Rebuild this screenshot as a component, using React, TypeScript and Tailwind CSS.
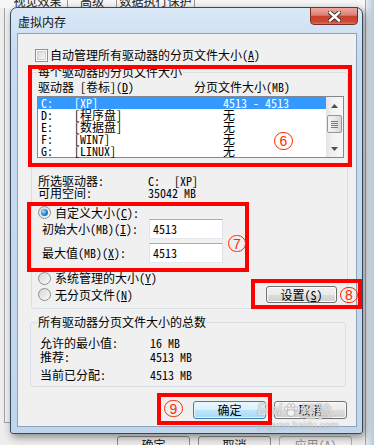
import React from "react";

const CheckBox = () => (
  <span className="block w-[13px] h-[13px] shrink-0 border border-[#8e8f8f] bg-white p-[1px]">
    <span className="block w-full h-full border border-[#cfcfcf] bg-[linear-gradient(135deg,#dadada,#f7f7f7)]" />
  </span>
);

const Radio = ({ checked }: { checked?: boolean }) => (
  <span className="flex items-center justify-center w-[13px] h-[13px] shrink-0 rounded-full border border-[#8e8f8f] bg-[linear-gradient(135deg,#d4d4d4,#fbfbfb)]">
    {checked ? (
      <span className="block w-[7px] h-[7px] rounded-full bg-[radial-gradient(circle_at_35%_35%,#a8e4ff_0%,#2c92dc_45%,#0b4a86_100%)]" />
    ) : null}
  </span>
);

const Button = ({
  children,
  primary,
}: {
  children: React.ReactNode;
  primary?: boolean;
}) => (
  <div
    className={
      primary
        ? "flex items-center justify-center w-[73px] h-[18px] rounded-[3px] border border-[#3c7fb1] bg-[linear-gradient(#eaf6fd,#d9f0fc_50%,#bee6fd_50%,#a7d9f5)] shadow-[inset_0_0_0_1px_#e3f4fc]"
        : "flex items-center justify-center w-[73px] h-[18px] rounded-[3px] border border-[#707070] bg-[linear-gradient(#f2f2f2,#ebebeb_50%,#dddddd_50%,#cfcfcf)] shadow-[inset_0_0_0_1px_#fbfbfb]"
    }
  >
    {children}
  </div>
);

const Key = ({ k }: { k: string }) => (
  <>
    (<u className="underline-offset-[1px]">{k}</u>)
  </>
);

const drives = [
  ["C:", "[XP]", "4513 - 4513"],
  ["D:", "[程序盘]", "无"],
  ["E:", "[数据盘]", "无"],
  ["F:", "[WIN7]", "无"],
  ["G:", "[LINUX]", "无"],
];

const Arrow = ({ up }: { up?: boolean }) => (
  <svg width="7" height="4" viewBox="0 0 7 4">
    <path d={up ? "M0 4 L3.5 0 L7 4 Z" : "M0 0 L7 0 L3.5 4 Z"} fill="#4d4d4d" />
  </svg>
);

const Mark = ({ n, className }: { n: string; className: string }) => (
  <span
    className={`absolute flex items-center justify-center rounded-full border border-[#ff2a00] text-[#ff2a00] font-['Liberation_Sans',sans-serif] text-[14px] leading-none ${className}`}
  >
    {n}
  </span>
);

export default function App() {
  return (
    <div className="relative w-[374px] h-[445px] overflow-hidden bg-[#eeeeee] text-black text-[12px] leading-[14px] font-['Noto_Sans_Mono_CJK_SC','Noto_Sans_CJK_SC',monospace]">
      {/* parent window behind */}
      <div className="flex flex-col h-full">
        <div className="flex h-[14px] -mt-[6px] pl-[8px] bg-[#f7f7f7] text-[#222]">
          <div className="w-[60px] flex justify-center border-r border-[#9a9a9a]">视觉效果</div>
          <div className="w-[49px] flex justify-center border-r border-[#9a9a9a]">高级</div>
          <div className="w-[78px] flex justify-center border-r border-[#9a9a9a]">数据执行保护</div>
        </div>
        <div className="flex-1 pl-[4px]">
          <div className="w-[60px] h-[415px] border-l border-b border-[#a3a3a3] bg-[#f4f4f4]" />
        </div>
        <div className="flex h-[9px] pl-[117px] gap-[8px] text-[#111]">
          <div className="w-[73px] h-[23px] flex justify-center pt-[1px] rounded-[3px] border border-[#8a8a8a] bg-[#ececec]">确定</div>
          <div className="w-[73px] h-[23px] flex justify-center pt-[1px] rounded-[3px] border border-[#8a8a8a] bg-[#ececec]">取消</div>
          <div className="w-[73px] h-[23px] flex justify-center pt-[1px] rounded-[3px] border border-[#b0b0b0] bg-[#f0f0f0] text-[#8d8d8d]">
            应用<Key k="A" />
          </div>
        </div>
      </div>
      <div className="absolute right-0 top-0 w-[9px] h-full border-l border-[#9aa7b4] bg-[linear-gradient(90deg,#e4ebf2,#b9cadb)]" />

      {/* dialog */}
      <div className="absolute left-[10px] top-[7px] w-[353px] h-[427px] flex flex-col rounded-t-[7px] rounded-b-[3px] border border-[#34485e] bg-[linear-gradient(180deg,#dbe9f7_0%,#c7dcf1_10%,#c0d6ed_100%)] pl-[6px] pr-[5px] pb-[6px] shadow-[2px_3px_8px_rgba(0,0,0,0.45)]">
        <div className="flex h-[25px] items-start shrink-0">
          <span className="mt-[7px] ml-[1px] text-[#111]">虚拟内存</span>
          <div className="ml-auto -mt-[1px] -mr-[1px] w-[48px] h-[18px] flex items-center justify-center rounded-b-[4px] border border-[#7a2e25] bg-[linear-gradient(#eba9a0,#df8073_45%,#c8412d_52%,#c94a35_85%,#de7560)]">
            <svg width="13" height="11" viewBox="0 0 13 11">
              <path d="M2 1.5 L11 9.5 M11 1.5 L2 9.5" stroke="#3b3b3b" strokeWidth="4.4" strokeLinecap="square" />
              <path d="M2 1.5 L11 9.5 M11 1.5 L2 9.5" stroke="#ffffff" strokeWidth="2.4" strokeLinecap="square" />
            </svg>
          </div>
        </div>

        <div className="flex-1 flex flex-col border border-[#8ea3ba] bg-[#f0f0f0]">
          <div className="flex items-center h-[14px] mt-[14px] ml-[17px] gap-[2px]">
            <CheckBox />
            <span>
              自动管理所有驱动器的分页文件大小<Key k="A" />
            </span>
          </div>

          <fieldset className="mt-[3px] ml-[13px] w-[317px] border border-[#d5dfe5] rounded-[3px] pl-[5px] pb-[5px]">
            <legend className="px-[1px] leading-[14px]">每个驱动器的分页文件大小</legend>
            <div className="flex h-[14px] mt-[1px] pl-[1px]">
              <span className="w-[156px]">
                驱动器 [卷标]<Key k="D" />
              </span>
              <span>分页文件大小(MB)</span>
            </div>

            <div className="flex w-[307px] h-[62px] mt-[2px] border border-[#828790] bg-white">
              <div className="w-[288px] flex flex-col">
                {drives.map((d, i) => (
                  <div
                    key={d[0]}
                    className={
                      i === 0
                        ? "flex h-[12px] leading-[12px] bg-[#3399ff] text-white"
                        : "flex h-[12px] leading-[12px]"
                    }
                  >
                    <span className="w-[36px] pl-[3px]">{d[0]}</span>
                    <span className="w-[149px]">{d[1]}</span>
                    <span>{d[2]}</span>
                  </div>
                ))}
              </div>
              <div className="w-[17px] flex flex-col bg-[linear-gradient(90deg,#e3e3e3,#f1f1f1_35%,#f7f7f7)]">
                <div className="h-[17px] flex items-center justify-center">
                  <Arrow up />
                </div>
                <div className="h-[18px] mt-[1px] mx-[1px] rounded-[2px] border border-[#979797] bg-[linear-gradient(90deg,#f4f4f4,#e9e9e9_50%,#d8d8d8)] flex flex-col items-center justify-center gap-[1px]">
                  <span className="block w-[7px] h-[1px] bg-[#7a7a7a]" />
                  <span className="block w-[7px] h-[1px] bg-[#7a7a7a]" />
                  <span className="block w-[7px] h-[1px] bg-[#7a7a7a]" />
                  <span className="block w-[7px] h-[1px] bg-[#7a7a7a]" />
                </div>
                <div className="flex-1" />
                <div className="h-[17px] flex items-center justify-center">
                  <Arrow />
                </div>
              </div>
            </div>

            <div className="flex h-[12px] leading-[12px] mt-[17px] pl-[1px]">
              <span className="w-[110px]">所选驱动器:</span>
              <span className="w-[26px]">C:</span>
              <span>[XP]</span>
            </div>
            <div className="flex h-[12px] leading-[12px] pl-[1px]">
              <span className="w-[110px]">可用空间:</span>
              <span>35042 MB</span>
            </div>

            <div className="flex items-center h-[13px] mt-[7px] pl-[1px] gap-[4px]">
              <Radio checked />
              <span>
                自定义大小<Key k="C" />:
              </span>
            </div>
            <div className="flex items-center h-[20px] pl-[5px]">
              <span className="w-[107px]">
                初始大小(MB)<Key k="I" />:
              </span>
              <div className="w-[74px] h-[20px] flex items-center pl-[3px] bg-white border border-[#e2e3ea] border-t-[#abadb3] border-b-[#e3e9ef]">
                4513
              </div>
            </div>
            <div className="flex items-center h-[20px] mt-[4px] pl-[5px]">
              <span className="w-[107px]">
                最大值(MB)<Key k="X" />:
              </span>
              <div className="w-[74px] h-[20px] flex items-center pl-[3px] bg-white border border-[#e2e3ea] border-t-[#abadb3] border-b-[#e3e9ef]">
                4513
              </div>
            </div>

            <div className="flex items-center h-[14px] mt-[8px] pl-[1px] gap-[4px]">
              <Radio />
              <span>
                系统管理的大小<Key k="Y" />
              </span>
            </div>
            <div className="flex items-center h-[17px] mt-[1px] pl-[1px] gap-[4px]">
              <Radio />
              <span>
                无分页文件<Key k="N" />
              </span>
              <div className="ml-auto mr-[10px] w-[71px] h-[17px] flex items-center justify-center rounded-[3px] border border-[#707070] bg-[linear-gradient(#f2f2f2,#ebebeb_50%,#dddddd_50%,#cfcfcf)] shadow-[inset_0_0_0_1px_#fbfbfb]">
                设置<Key k="S" />
              </div>
            </div>
          </fieldset>

          <fieldset className="mt-[6px] ml-[12px] w-[316px] border border-[#d5dfe5] rounded-[3px] pl-[6px] pb-[4px]">
            <legend className="px-[1px] leading-[14px]">所有驱动器分页文件大小的总数</legend>
            <div className="flex h-[14px] mt-[7px] pl-[3px]">
              <span className="w-[110px]">允许的最小值:</span>
              <span>16 MB</span>
            </div>
            <div className="flex h-[14px] pl-[3px]">
              <span className="w-[110px]">推荐:</span>
              <span>4513 MB</span>
            </div>
            <div className="flex h-[14px] mt-[4px] pl-[3px]">
              <span className="w-[110px]">当前已分配:</span>
              <span>4513 MB</span>
            </div>
          </fieldset>

          <div className="flex justify-end gap-[8px] mt-[14px] mr-[9px]">
            <Button primary>确定</Button>
            <Button>取消</Button>
          </div>
        </div>
      </div>

      {/* watermark */}
      <div className="absolute left-[257px] top-[401px] flex items-center text-white/70 text-[16px] leading-[18px] font-['Liberation_Sans',sans-serif] font-bold italic [text-shadow:0_0_1px_rgba(110,110,110,0.8)]">
        <span>Bai</span>
        <svg width="16" height="16" viewBox="0 0 16 16" className="mx-[1px] opacity-70">
          <ellipse cx="8" cy="11" rx="4" ry="3.5" fill="#fff" stroke="#999" strokeWidth="0.8" />
          <ellipse cx="3" cy="6.5" rx="1.6" ry="2" fill="#fff" stroke="#999" strokeWidth="0.8" />
          <ellipse cx="6.3" cy="3.5" rx="1.6" ry="2" fill="#fff" stroke="#999" strokeWidth="0.8" />
          <ellipse cx="9.8" cy="3.5" rx="1.6" ry="2" fill="#fff" stroke="#999" strokeWidth="0.8" />
          <ellipse cx="13" cy="6.5" rx="1.6" ry="2" fill="#fff" stroke="#999" strokeWidth="0.8" />
        </svg>
        <span className="not-italic font-['Noto_Sans_CJK_SC',sans-serif]">经验</span>
      </div>
      <div className="absolute left-[258px] top-[420px] text-[10px] leading-[11px] text-white/60 font-['Liberation_Sans',sans-serif] [text-shadow:0_0_1px_rgba(110,110,110,0.7)]">
        jingyan.baidu.com
      </div>

      {/* annotations */}
      <div className="absolute left-[28px] top-[65px] w-[324px] h-[102px] border-[4px] border-[#ff0000]" />
      <div className="absolute left-[27px] top-[202px] w-[222px] h-[70px] border-[4px] border-[#ff0000]" />
      <div className="absolute left-[251px] top-[279px] w-[111px] h-[30px] border-[4px] border-[#ff0000]" />
      <div className="absolute left-[157px] top-[393px] w-[115px] h-[32px] border-[4px] border-[#ff0000]" />
      <Mark n="6" className="left-[274px] top-[132px] w-[19px] h-[18px]" />
      <Mark n="7" className="left-[228px] top-[235px] w-[18px] h-[17px]" />
      <Mark n="8" className="left-[340px] top-[287px] w-[18px] h-[16px]" />
      <Mark n="9" className="left-[164px] top-[400px] w-[19px] h-[17px]" />
    </div>
  );
}
